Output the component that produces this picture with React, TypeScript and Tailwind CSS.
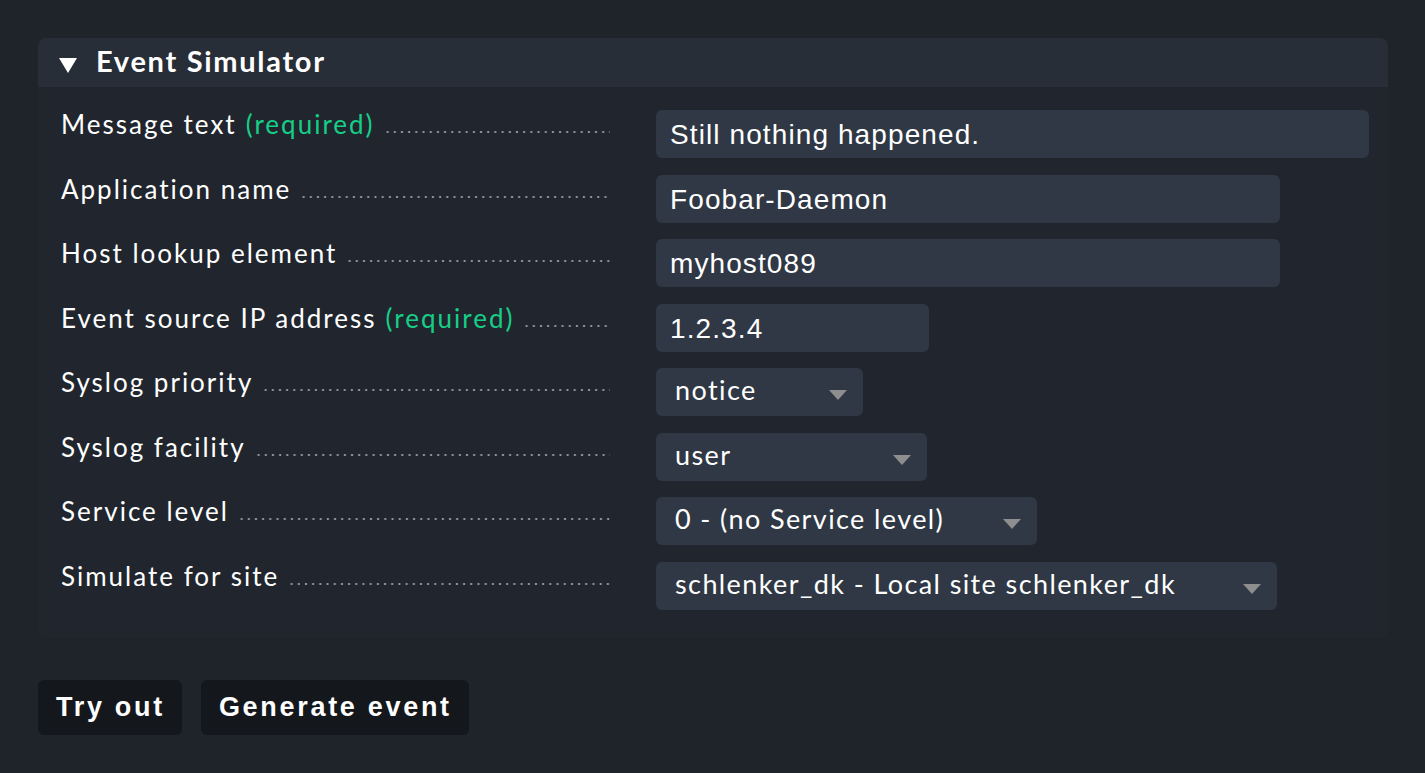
import React from 'react';

type Row = {
  label: string;
  required?: boolean;
  kind: 'text' | 'select';
  value: string;
  width: string;
};

const rows: Row[] = [
  { label: 'Message text', required: true, kind: 'text', value: 'Still nothing happened.', width: 'w-[713px]' },
  { label: 'Application name', kind: 'text', value: 'Foobar-Daemon', width: 'w-[624px]' },
  { label: 'Host lookup element', kind: 'text', value: 'myhost089', width: 'w-[624px]' },
  { label: 'Event source IP address', required: true, kind: 'text', value: '1.2.3.4', width: 'w-[273px]' },
  { label: 'Syslog priority', kind: 'select', value: 'notice', width: 'w-[207px]' },
  { label: 'Syslog facility', kind: 'select', value: 'user', width: 'w-[271px]' },
  { label: 'Service level', kind: 'select', value: '0 - (no Service level)', width: 'w-[381px]' },
  { label: 'Simulate for site', kind: 'select', value: 'schlenker_dk - Local site schlenker_dk', width: 'w-[621px]' },
];

function Field({ row }: { row: Row }) {
  if (row.kind === 'text') {
    return (
      <div className={`${row.width} h-12 rounded-md bg-[#2f3844] pl-[14px] pt-[11px] text-[28px] leading-[28px] tracking-[1.1px] text-white font-['Liberation_Sans',sans-serif] whitespace-nowrap`}>
        {row.value}
      </div>
    );
  }
  return (
    <div className={`${row.width} h-12 rounded-md bg-[#2f3844] flex items-start pl-[19px] pr-[16px] text-white`}>
      <span className="flex-1 mt-[8px] text-[27px] leading-[27px] tracking-[1.4px] whitespace-nowrap">{row.value}</span>
      <svg width="18" height="10" viewBox="0 0 18 10" className="mt-[22px] shrink-0">
        <polygon points="0,0 18,0 9,10" fill="#8e8e8e" />
      </svg>
    </div>
  );
}

export default function App() {
  return (
    <div className="min-h-[773px] bg-[#1f232a] pt-[38px] px-[38px] font-['Lato',sans-serif] text-white">
      <div className="w-[1350px] rounded-lg bg-[#21262e] overflow-hidden">
        <div className="h-[49px] bg-[#272e37] flex items-start pl-[21px]">
          <svg width="18" height="15" viewBox="0 0 18 15" className="mt-[20px] shrink-0">
            <polygon points="0,0 18,0 9,15" fill="#ffffff" />
          </svg>
          <h2 className="ml-[19px] mt-[8px] text-[29px] leading-[29px] font-bold tracking-[1.7px]">Event Simulator</h2>
        </div>
        <div className="pt-[23px] pb-[28px] flex flex-col gap-[16.57px]">
          {rows.map((row) => (
            <div key={row.label} className="flex items-start h-12">
              <div className="w-[549px] shrink-0 ml-[23px] flex items-start text-[26px] leading-[26px] tracking-[2px]">
                <span className="whitespace-nowrap mt-[1px]">{row.label}</span>
                {row.required && <span className="ml-[9px] mt-[1px] text-[#16cf86] whitespace-nowrap">(required)</span>}
                <span className="flex-1 h-[4px] mt-[20px] ml-[9px] bg-[radial-gradient(circle,#8d929a_1.1px,transparent_1.5px)] bg-[length:7.2px_4px] bg-repeat-x" />
              </div>
              <div className="ml-[46px] shrink-0">
                <Field row={row} />
              </div>
            </div>
          ))}
        </div>
      </div>
      <div className="flex gap-[19px] mt-[42px] font-['Liberation_Sans',sans-serif]">
        <button className="h-[55px] pl-[18px] pr-[17px] rounded-md bg-[#14181d] text-[27px] font-bold tracking-[2.7px] text-white">Try out</button>
        <button className="h-[55px] pl-[18px] pr-[17px] rounded-md bg-[#14181d] text-[27px] font-bold tracking-[2.7px] text-white">Generate event</button>
      </div>
    </div>
  );
}
